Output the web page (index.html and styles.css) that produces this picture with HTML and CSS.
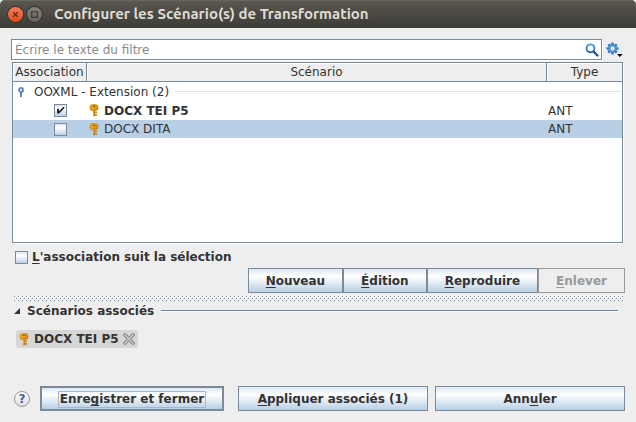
FILE: index.html
```html
<!DOCTYPE html>
<html lang="fr">
<head>
<meta charset="utf-8">
<title>Configurer les Scénario(s) de Transformation</title>
<link rel="stylesheet" href="styles.css">
</head>
<body>
<svg class="defs" aria-hidden="true">
  <defs>
    <linearGradient id="gold" x1="0" x2="1" y1="0" y2="1">
      <stop offset="0" stop-color="#ffbd2e"/><stop offset="1" stop-color="#c98008"/>
    </linearGradient>
    <linearGradient id="blue" x1="0" x2="0" y1="0" y2="1">
      <stop offset="0" stop-color="#4a9be6"/><stop offset="1" stop-color="#1b4f91"/>
    </linearGradient>
    <pattern id="dots" width="4" height="4" patternUnits="userSpaceOnUse">
      <path d="M1 1h1v1H1zM3 3h1v1H3z" fill="#7a8a99"/>
      <path d="M2 2h1v1H2zM0 0h1v1H0z" fill="#fff"/>
    </pattern>
    <symbol id="key" viewBox="0 0 10 13">
      <path d="M4 6h2v1.500h2v1.500H6v1h2v1.700H6L5 12.700 4 11.700z" fill="#c98008"/>
      <rect x="1" y=".5" width="8" height="6" rx="2.600" fill="url(#gold)" stroke="#c07d10" stroke-width=".7"/>
      <path d="M3.500 2.300h3" stroke="#8a5500" stroke-width="1.100"/>
      <path d="M4.600 6.500v5" stroke="#f0b040" stroke-width=".8"/>
    </symbol>
  </defs>
</svg>
<header class="titlebar">
  <button class="win close" aria-label="Fermer"><svg viewBox="0 0 16 16"><path d="M5.500 5.500l5 5m0-5l-5 5" stroke="#57200f" stroke-width="1.400"/></svg></button>
  <button class="win max" aria-label="Agrandir"><svg viewBox="0 0 16 16"><path d="M5 5h6v6H5z" fill="none" stroke="#393834" stroke-width="1.200"/></svg></button>
  <h1>Configurer les Scénario(s) de Transformation</h1>
</header>
<main>
  <div class="filter-row">
    <div class="filter">
      <input type="text" placeholder="Écrire le texte du filtre" aria-label="Filtre">
      <svg class="search" viewBox="0 0 14 14"><path d="M8.500 8.500l4 4" stroke="#244f94" stroke-width="2.400" stroke-linecap="round"/><circle cx="5.500" cy="5.300" r="4" fill="#f4faff" stroke="url(#blue)" stroke-width="1.700"/></svg>
    </div>
    <button class="gear" aria-label="Options"><svg viewBox="0 0 17 15"><g transform="translate(6.500 6.500)"><g stroke="#2f78c4" stroke-width="2.400"><path d="M0-6V6"/><path d="M-6 0H6"/><path d="M-4.200-4.200L4.200 4.200M-4.200 4.200L4.200-4.200"/></g><circle r="3.300" fill="#eee" stroke="#2975c4" stroke-width="2.200"/><circle r="3.500" fill="none" stroke="#70b5f1" stroke-width=".7"/></g><path d="M11 12h5.500l-2.700 3z"/></svg></button>
  </div>
  <div class="table-box">
    <table>
      <colgroup><col class="c-assoc"><col><col class="c-type"></colgroup>
      <thead><tr><th>Association</th><th>Scénario</th><th>Type</th></tr></thead>
      <tbody>
        <tr><td colspan="3"><div class="group"><svg class="pin" viewBox="0 0 6 10"><path d="M3 5v5" stroke="#6382bf" stroke-width="2"/><circle cx="3" cy="3" r="2" fill="#fff" stroke="#6382bf" stroke-width="1.900"/></svg><span>OOXML - Extension (2)</span><i></i></div></td></tr>
        <tr><td class="tick"><input type="checkbox" checked aria-label="DOCX TEI P5"></td><td><div class="name strong"><svg class="key"><use href="#key"/></svg>DOCX TEI P5</div></td><td>ANT</td></tr>
        <tr class="selected"><td class="tick"><input type="checkbox" aria-label="DOCX DITA"></td><td><div class="name"><svg class="key"><use href="#key"/></svg>DOCX DITA</div></td><td>ANT</td></tr>
      </tbody>
    </table>
  </div>
  <label class="follow"><input type="checkbox"><span><u>L</u>'association suit la sélection</span></label>
  <div class="actions">
    <button class="btn"><u>N</u>ouveau</button><button class="btn"><u>É</u>dition</button><button class="btn"><u>R</u>eproduire</button><button class="btn" disabled><u>E</u>nlever</button>
  </div>
  <div class="splitter"><svg aria-hidden="true"><rect width="100%" height="100%" fill="url(#dots)"/></svg></div>
  <section>
    <h2><svg class="tri" viewBox="0 0 6 6"><path d="M6 0v6H0z" fill="#333"/></svg>Scénarios associés<i></i></h2>
    <div class="chip"><svg class="key"><use href="#key"/></svg><span>DOCX TEI P5</span><button class="remove" aria-label="Retirer"><svg viewBox="0 0 12 12"><path d="M2 2l8 8m0-8l-8 8" stroke="#858585" stroke-width="3.400" stroke-linecap="square"/><path d="M2 2l8 8m0-8l-8 8" stroke="#c4c4c4" stroke-width="1.600" stroke-linecap="square"/></svg></button></div>
  </section>
  <footer>
    <button class="help" aria-label="Aide">?</button>
    <button class="btn default"><span>Enre<u>g</u>istrer et fermer</span></button>
    <button class="btn apply"><u>A</u>ppliquer associés (1)</button>
    <button class="btn cancel">Ann<u>u</u>ler</button>
  </footer>
</main>
</body>
</html>
```
FILE: styles.css
```css
* { box-sizing: border-box; }
body {
  margin: 0;
  background: #eee;
  color: #333;
  font: 12px/18px "DejaVu Sans", sans-serif;
}
button, input { font: inherit; color: inherit; }
button { padding: 0; border: 0; background: none; }
svg { display: block; flex: none; }
.defs { position: absolute; width: 0; height: 0; }
u { text-decoration-thickness: 1px; text-underline-offset: 2px; text-decoration-skip-ink: none; }

.titlebar {
  display: flex;
  align-items: center;
  height: 28px;
  padding: 0 8px;
  gap: 4px;
  border-radius: 5px 5px 0 0;
  background: linear-gradient(#5b5850, #3c3b37);
  box-shadow: inset 0 1px #69665e;
}
.titlebar h1 {
  margin: 0 0 0 8px;
  color: #dfdbd2;
  font: bold 15px/24px Ubuntu, "Noto Sans", sans-serif;
  white-space: nowrap;
}
.win { width: 15px; height: 15px; border-radius: 50%; box-shadow: 0 0 0 1px #33322e; }
.close { background: linear-gradient(#f58058, #df4b1b); }
.max { background: linear-gradient(#85827a, #64625b); }

main { padding: 11px 11px 11px 12px; }
.filter-row { display: flex; align-items: center; gap: 4px; margin-left: -1px; }
.filter {
  flex: 1;
  display: flex;
  align-items: center;
  height: 21px;
  padding: 0 2px 0 3px;
  border: 1px solid #7a8a99;
  background: #fff;
  box-shadow: 1px 1px #fff;
}
.filter input { flex: 1; min-width: 0; height: 18px; padding: 0; border: 0; outline: 0; background: none; }
.filter input::placeholder { color: #8a8a8a; opacity: 1; }
.search { width: 14px; height: 14px; }
.gear { width: 17px; height: 15px; margin-right: 2px; }
.gear svg { width: 17px; height: 15px; }

.table-box {
  height: 181px;
  margin: 2px 2px 0 0;
  border: 1px solid #7a8a99;
  background: #fff;
  box-shadow: 1px 1px #fff;
}
table { width: 100%; border-collapse: separate; border-spacing: 0; table-layout: fixed; }
.c-assoc { width: 74px; }
.c-type { width: 75px; }
th {
  height: 19px;
  padding: 0;
  border: solid #7a8a99;
  border-width: 0 1px 1px 0;
  background: #eee;
  box-shadow: inset 1px 1px #fff;
  font-weight: normal;
  white-space: nowrap;
}
th:last-child { border-right: 0; }
td { height: 19px; padding: 0 0 0 1px; line-height: 18px; }
.selected td { height: 18px; background: #b8cfe5; }
.group { display: flex; align-items: center; padding: 0 1px 0 4px; }
.group span { margin: 0 6px 0 10px; }
.group i { flex: 1; height: 1px; background: #e3e3e3; }
.pin { width: 6px; height: 10px; }
.tick { padding-left: 41px; }
.name { display: flex; align-items: center; gap: 5px; padding-left: 1px; }
.strong { font-weight: bold; }
.key { width: 10px; height: 13px; }
input[type="checkbox"] {
  appearance: none;
  display: block;
  flex: none;
  width: 13px;
  height: 13px;
  margin: 0;
  border: 1px solid #7a8a99;
  background: linear-gradient(#dde8f3, #fff 35%, #b8cfe5);
}
input[type="checkbox"]:checked::before {
  content: "";
  display: block;
  width: 9px;
  height: 9px;
  margin: 1px;
  background: #222;
  clip-path: polygon(12% 30%, 34% 30%, 34% 58%, 80% 12%, 92% 12%, 92% 24%, 34% 84%, 12% 84%);
}

.follow { display: flex; align-items: center; gap: 4px; width: max-content; margin: 5px 0 0 3px; font-weight: bold; }
.actions { display: flex; justify-content: flex-end; margin-top: 2px; }
.btn {
  height: 25px;
  padding: 0 17px;
  border: 1px solid #7a8a99;
  background: linear-gradient(#dde8f3, #fff 32%, #b8cfe5);
  font-weight: bold;
  line-height: 18px;
  white-space: nowrap;
}
.btn:disabled { border-color: #999; background: #eee; color: #999; }
.splitter { height: 6px; margin: 2px 2px 0 1px; }
.splitter svg { width: 100%; height: 6px; }

h2 { display: flex; align-items: center; margin: 1px 7px 0 2px; font-size: 12px; line-height: 18px; }
h2 i { flex: 1; height: 2px; margin-left: 7px; border-top: 1px solid #6382bf; background: #fff; }
.tri { width: 6px; height: 6px; margin-right: 7px; }
.chip {
  display: flex;
  align-items: center;
  width: max-content;
  height: 18px;
  margin: 10px 0 0 4px;
  padding: 0 3px;
  border-radius: 3px;
  background: #d6d6d6;
  font-weight: bold;
}
.chip span { margin: 0 4px 0 5px; }
.remove, .remove svg { width: 12px; height: 12px; }

footer {
  display: grid;
  grid-template-columns: 28px 184px 14px 1fr 7px 1fr;
  align-items: center;
  margin-top: 38px;
}
.help {
  width: 16px;
  height: 16px;
  margin-left: 2px;
  border: 1px solid #999;
  border-radius: 50%;
  background: linear-gradient(#fff, #ddd);
  color: #4b5f9e;
  font-weight: bold;
  line-height: 14px;
}
.default { padding: 0; border-width: 2px; }
.default span { display: inline-block; padding: 0 1px; border: 1px solid #a3b8cc; line-height: 15px; }
.apply { grid-column: 4; }
.cancel { grid-column: 6; }
```
